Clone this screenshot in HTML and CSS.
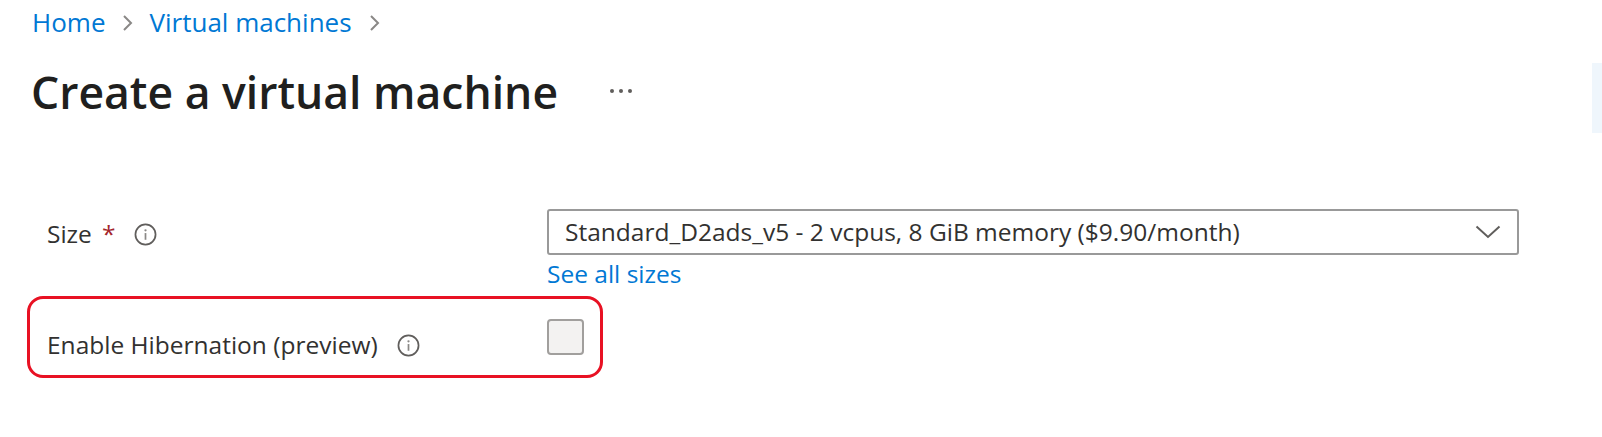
FILE: index.html
```html
<!DOCTYPE html>
<html lang="en">
<head>
<meta charset="utf-8">
<title>Create a virtual machine</title>
<link rel="stylesheet" href="styles.css">
</head>
<body>
<div class="page">
  <nav class="breadcrumb">
    <a class="crumb" href="#">Home</a>
    <svg class="crumb-sep" viewBox="0 0 12 20" width="12" height="20"><path d="M2 3 L9 10 L2 17" fill="none" stroke="#8a8886" stroke-width="2"/></svg>
    <a class="crumb" href="#">Virtual machines</a>
    <svg class="crumb-sep" viewBox="0 0 12 20" width="12" height="20"><path d="M2 3 L9 10 L2 17" fill="none" stroke="#8a8886" stroke-width="2"/></svg>
  </nav>
  <header class="title-row">
    <h1 class="title">Create a virtual machine</h1>
    <span class="more">
      <span class="dot"></span><span class="dot"></span><span class="dot"></span>
    </span>
  </header>
  <section class="form">
    <div class="row size-row">
      <div class="label">
        <span>Size</span><span class="req">*</span>
        <svg class="info" viewBox="0 0 24 24" width="23" height="23"><circle cx="12" cy="12" r="10.5" fill="none" stroke="#605e5c" stroke-width="1.8"/><circle cx="12" cy="7.6" r="1.2" fill="#8a8886"/><path d="M12 10.5 V17.5" stroke="#8a8886" stroke-width="1.8"/></svg>
      </div>
      <div class="control">
        <div class="select">
          <span class="select-text">Standard_D2ads_v5 - 2 vcpus, 8 GiB memory ($9.90/month)</span>
          <svg class="chev" viewBox="0 0 26 14" width="26" height="14"><path d="M1.5 1.5 L13 12 L24.5 1.5" fill="none" stroke="#605e5c" stroke-width="2"/></svg>
        </div>
        <a class="link" href="#">See all sizes</a>
      </div>
    </div>
    <div class="row hib-row">
      <div class="label">
        <span>Enable Hibernation (preview)</span>
        <svg class="info" viewBox="0 0 24 24" width="23" height="23"><circle cx="12" cy="12" r="10.5" fill="none" stroke="#605e5c" stroke-width="1.8"/><circle cx="12" cy="7.6" r="1.2" fill="#8a8886"/><path d="M12 10.5 V17.5" stroke="#8a8886" stroke-width="1.8"/></svg>
      </div>
      <div class="control">
        <span class="checkbox"></span>
      </div>
    </div>
  </section>
  <div class="side-tab"></div>
</div>
</body>
</html>
```

FILE: styles.css
```css
html, body {
  margin: 0;
  padding: 0;
  background: #ffffff;
}
body {
  font-family: "Open Sans", "Noto Sans", "Liberation Sans", sans-serif;
  font-size: 24.5px;
  color: #323130;
  width: 1602px;
  height: 437px;
  overflow: hidden;
}
.page {
  position: relative;
  height: 437px;
}
.breadcrumb {
  display: flex;
  align-items: center;
  padding: 6px 0 0 32px;
  height: 32px;
  line-height: 32px;
  font-size: 26px;
}
.crumb {
  color: #0078d4;
  text-decoration: none;
}
.crumb-sep {
  margin: 2px 15px 0 17px;
}
.title-row {
  display: flex;
  align-items: flex-start;
  margin-top: 26px;
  padding-left: 31px;
}
.title {
  margin: 0;
  font-size: 44.5px;
  line-height: 56px;
  font-weight: 600;
  color: #201f1e;
}
.more {
  display: flex;
  gap: 5px;
  margin: 25px 0 0 52px;
}
.dot {
  width: 4px;
  height: 4px;
  border-radius: 50%;
  background: #605e5c;
}
.form {
  padding: 91px 0 0 27px;
}
.row {
  display: grid;
  grid-template-columns: 500px auto;
  align-items: start;
}
.size-row {
  padding-left: 20px;
}
.label {
  display: flex;
  align-items: center;
  line-height: 46px;
  height: 46px;
}
.req {
  color: #a4262c;
  margin-left: 10px;
}
.info {
  margin-left: 19px;
}
.control {
  display: flex;
  flex-direction: column;
}
.select {
  box-sizing: border-box;
  width: 972px;
  height: 46px;
  margin-top: -2px;
  border: 2px solid #999999;
  border-radius: 3px;
  display: flex;
  align-items: center;
  justify-content: space-between;
  padding: 0 16px 0 16px;
  line-height: 42px;
}
.select-text {
  color: #323130;
}
.link {
  color: #0078d4;
  text-decoration: none;
  line-height: 32px;
  margin-top: 3px;
}
.hib-row {
  box-sizing: border-box;
  width: 576px;
  height: 82px;
  margin-top: 6px;
  border: 3px solid #e81123;
  border-radius: 16px;
  padding-left: 17px;
  grid-template-columns: 500px auto;
}
.hib-row .label {
  height: 32px;
  line-height: 32px;
  margin-top: 30px;
}
.hib-row .control {
  padding-top: 20px;
}
.checkbox {
  box-sizing: border-box;
  width: 37px;
  height: 36px;
  border: 2px solid #a19f9d;
  border-radius: 4px;
  background: #f3f2f1;
}
.side-tab {
  position: absolute;
  top: 63px;
  right: 0;
  width: 10px;
  height: 70px;
  background: #eff6fc;
}
```
